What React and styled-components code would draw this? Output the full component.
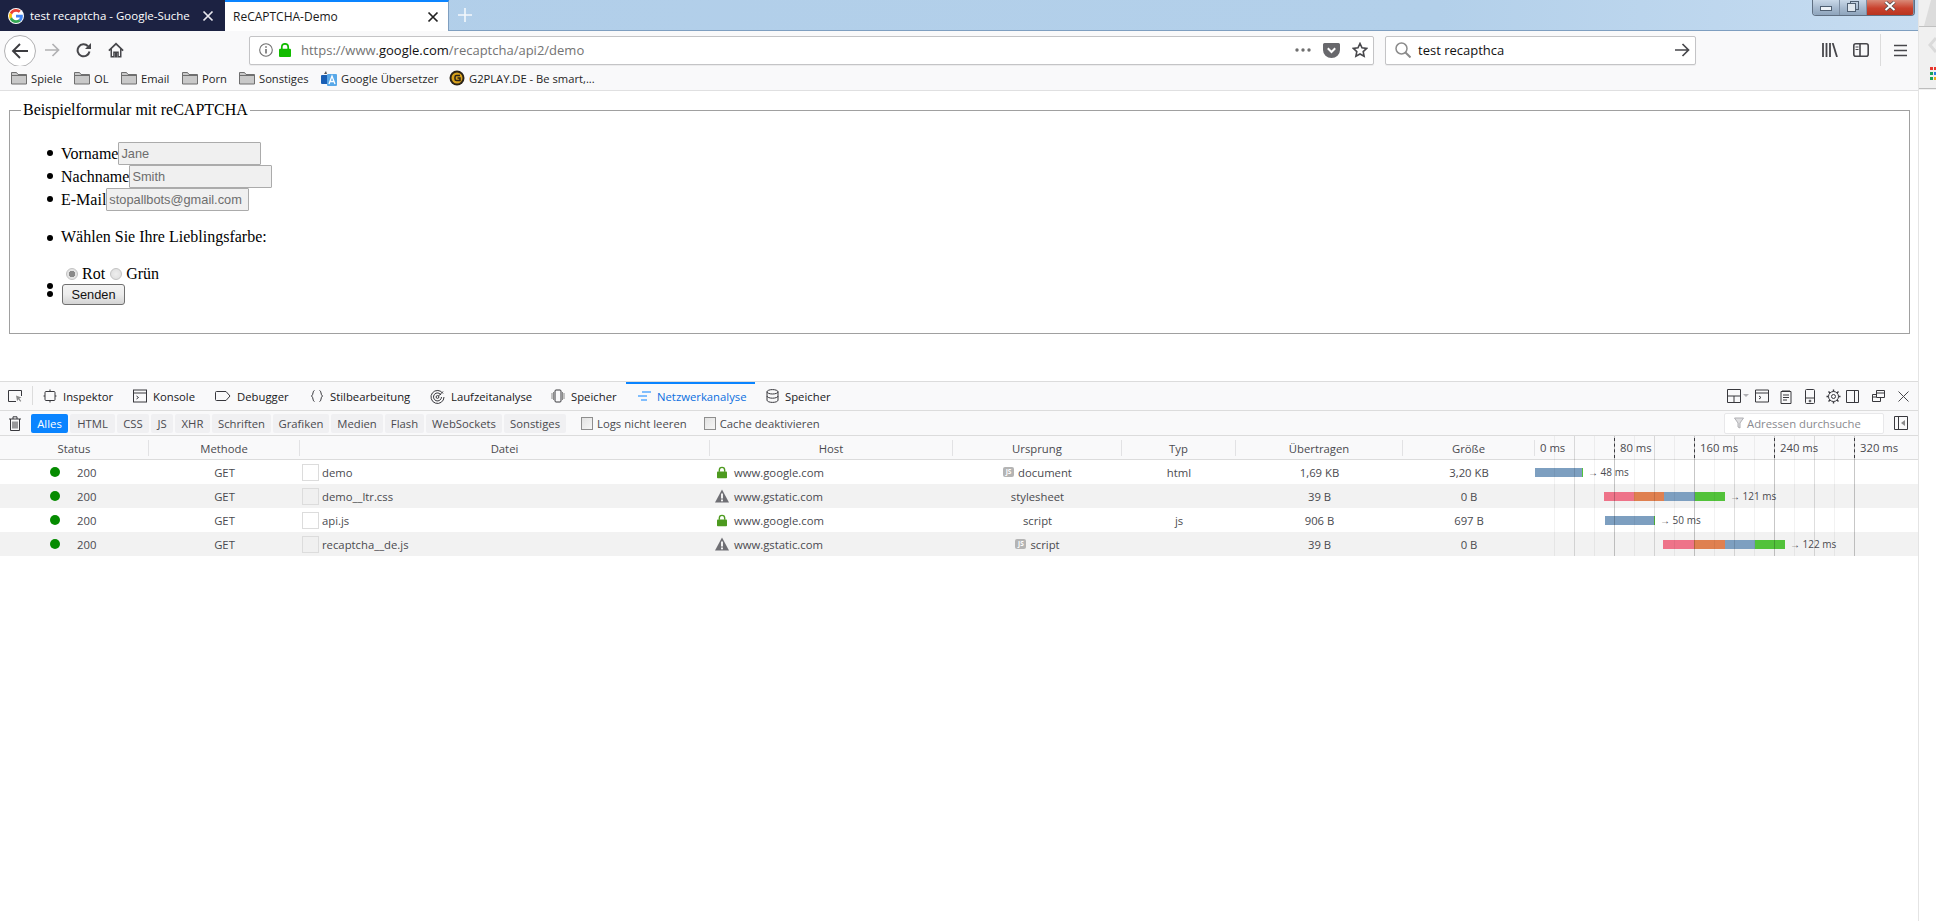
import React from "react";
import styled, { createGlobalStyle } from "styled-components";

const GlobalStyle = createGlobalStyle`
  html, body {
    margin: 0;
    padding: 0;
    background: #fff;
    overflow: hidden;
  }
  * {
    box-sizing: border-box;
  }
`;

const UI_FONT = `"Open Sans", "Noto Sans", sans-serif`;

const Screen = styled.div`
  display: flex;
  width: 1936px;
  height: 921px;
  overflow: hidden;
  font-family: ${UI_FONT};
`;

const Main = styled.div`
  width: 1919px;
  height: 921px;
  display: flex;
  flex-direction: column;
  border-right: 1px solid #e4e4e4;
`;

const Sliver = styled.div`
  width: 17px;
  height: 90px;
  flex: none;
`;

/* tab strip */
const TabStrip = styled.div`
  height: 31px;
  display: flex;
  background: linear-gradient(90deg, #b1cee9 0%, #b3d0ea 75%, #c6dcf1 100%);
  border-bottom: 1px solid #7f9fc0;
  position: relative;
`;

const Tab = styled.div`
  width: ${(p) => p.$w}px;
  height: 31px;
  display: flex;
  align-items: center;
  padding-left: ${(p) => p.$pad}px;
  font-size: ${(p) => p.$fs}px;
  color: ${(p) => (p.$active ? "#1a1a1a" : "#fff")};
  background: ${(p) => (p.$active ? "#fff" : "#1c2242")};
  border-top: ${(p) => (p.$active ? "2px solid #0a84ff" : "none")};
  border-right: ${(p) => (p.$active ? "1px solid #7f9fc0" : "none")};
`;

const TabLabel = styled.span`
  width: ${(p) => p.$w}px;
  margin-left: ${(p) => p.$ml || 0}px;
  white-space: nowrap;
`;

const NewTab = styled.svg`
  margin: 8px 0 0 9px;
`;

const WindowButtons = styled.div`
  margin: 0 3px 0 auto;
  width: 103px;
  height: 16px;
  display: flex;
  border: 1px solid #5f6f82;
  border-top: none;
  border-radius: 0 0 4px 4px;
  overflow: hidden;
`;

const WinButton = styled.div`
  width: ${(p) => p.$w}px;
  display: flex;
  align-items: flex-start;
  justify-content: center;
  border-right: 1px solid #7d8ea3;
  background: ${(p) =>
    p.$close
      ? "linear-gradient(#d98a78, #c9412d 55%, #b8341f)"
      : "linear-gradient(#c9d8e8, #a8bbd0 50%, #8ea4bc)"};
`;

/* address toolbar */
const Toolbar = styled.div`
  height: 35px;
  display: flex;
  align-items: center;
  padding-left: 4px;
  background: #f9f9fa;
`;

const BackButton = styled.div`
  width: 32px;
  height: 32px;
  margin-top: 4px;
  display: flex;
  align-items: center;
  justify-content: center;
  background: #fff;
  border: 1px solid #b1b1b3;
  border-radius: 50%;
`;

const NavGroup = styled.div`
  display: flex;
  align-items: center;
  gap: 16px;
  margin-left: 8px;
  margin-top: 3px;
`;

const UrlBox = styled.div`
  height: 29px;
  display: flex;
  align-items: center;
  width: ${(p) => p.$w}px;
  margin-left: ${(p) => p.$ml}px;
  padding-left: ${(p) => p.$pad}px;
  margin-top: 3px;
  background: #fff;
  border: 1px solid #c4c4c6;
  border-radius: 2px;
  font-size: 13px;
  box-shadow: 0 1px 1px rgba(0, 0, 0, 0.06);
`;

const UrlText = styled.span`
  color: #737373;
  margin-left: 10px;
  white-space: nowrap;
`;

const UrlHost = styled.span`
  color: #111;
`;

const UrlActions = styled.div`
  margin-left: auto;
  display: flex;
  align-items: center;
  gap: 12px;
  padding-right: 5px;
`;

const SearchText = styled.span`
  color: #111;
  margin-left: 7px;
`;

const ToolIcons = styled.div`
  display: flex;
  align-items: center;
  margin-left: 126px;
  margin-top: 3px;
`;

const ToolSep = styled.div`
  width: 1px;
  height: 32px;
  background: #dcdcdc;
  margin: 0 13px 0 11px;
`;

/* bookmarks */
const Bookmarks = styled.div`
  height: 25px;
  display: flex;
  align-items: center;
  padding-left: 11px;
  font-size: 11.2px;
  color: #1f1f1f;
  background: #f9f9fa;
  border-bottom: 1px solid #e0e0e1;
`;

const Bookmark = styled.div`
  width: ${(p) => p.$w}px;
  display: flex;
  align-items: center;
  gap: 4px;
  white-space: nowrap;
`;

/* page content */
const Page = styled.div`
  height: 290px;
  padding: 10px 9px 0;
  font-family: "Liberation Serif", serif;
  font-size: 16px;
  color: #000;
`;

const Fieldset = styled.fieldset`
  margin: 0;
  width: 1901px;
  height: 233px;
  padding: 0 0 0 9px;
  border: 1px solid #a0a0a0;
  min-inline-size: 0;
`;

const Legend = styled.legend`
  padding: 0 2px;
  margin-left: 2px;
  line-height: 18px;
`;

const FormList = styled.ul`
  list-style: none;
  margin: 23px 0 0;
  padding: 0 0 0 42px;
`;

const FormItem = styled.li`
  position: relative;
  display: flex;
  align-items: center;
  height: 23px;

  &::before {
    content: "";
    position: absolute;
    left: -14px;
    top: 8px;
    width: 6px;
    height: 6px;
    border-radius: 50%;
    background: #000;
  }
`;

const ColourItem = styled(FormItem)`
  display: block;
  height: auto;
  padding-top: 17px;

  &::before {
    top: 24px;
  }
`;

const ColourQuestion = styled.div`
  line-height: 18px;
  margin-bottom: 19px;
`;

const ColourChoices = styled.div`
  display: flex;
  align-items: center;
  height: 18px;
  padding-left: 5px;
`;

const Radio = styled.input.attrs({ type: "radio" })`
  appearance: none;
  width: 12px;
  height: 12px;
  margin: 0 4px 0 ${(p) => p.$ml || 0}px;
  border-radius: 50%;
  border: 1px solid #c2c2c2;
  background: ${(p) =>
    p.$on
      ? "radial-gradient(circle, #8a8a8a 0 3px, #e4e4e4 3.5px)"
      : "radial-gradient(circle, #eee, #dcdcdc)"};
`;

const EmptyItem = styled(FormItem)`
  height: 1px;

  &::before {
    top: 0;
  }
`;

const FormInput = styled.input`
  width: 143px;
  height: 23px;
  padding: 1px 2px;
  margin: 0;
  background: #f0f0f0;
  border: 1px solid #ababab;
  border-radius: 1px;
  color: #6d6d6d;
  font-family: "Liberation Sans", sans-serif;
  font-size: 12.8px;
  outline: none;
`;

const SendItem = styled(FormItem)`
  height: 21px;

  &::before {
    top: 7px;
  }
`;

const SendButton = styled.button`
  width: 63px;
  height: 21px;
  margin-left: 1px;
  padding: 0;
  border: 1px solid #707070;
  border-radius: 3px;
  background: linear-gradient(#f3f3f3 0%, #ececec 50%, #d4d4d4 100%);
  color: #111;
  font-family: "Liberation Sans", sans-serif;
  font-size: 12.8px;
`;

/* devtools */
const Devtools = styled.div`
  border-top: 1px solid #dcdcdc;
  color: #38383d;
`;

const DevTabs = styled.div`
  height: 29px;
  display: flex;
  align-items: stretch;
  background: #f9f9fa;
  border-bottom: 1px solid #dcdcdc;
  font-size: 11.3px;
`;

const Inspect = styled.div`
  width: 33px;
  display: flex;
  align-items: center;
  padding-left: 8px;
  position: relative;
  &::after {
    content: "";
    position: absolute;
    right: 0;
    top: 4px;
    bottom: 5px;
    width: 1px;
    background: #dcdcdc;
  }
`;

const DevTab = styled.div`
  width: ${(p) => p.$w}px;
  display: flex;
  align-items: center;
  gap: 6px;
  padding-left: ${(p) => p.$pad || 10}px;
  white-space: nowrap;
  color: ${(p) => (p.$active ? "#0a6fe0" : "#18181a")};
  box-shadow: ${(p) => (p.$active ? "inset 0 2px 0 #0a84ff" : "none")};
`;

const DevActions = styled.div`
  margin-left: auto;
  display: flex;
  align-items: center;
  padding-right: 9px;
`;

const DevAction = styled.div`
  width: ${(p) => p.$w}px;
  display: flex;
  justify-content: flex-start;
`;

const FilterBar = styled.div`
  height: 25px;
  display: flex;
  align-items: center;
  padding-left: 9px;
  background: #f9f9fa;
  border-bottom: 1px solid #dcdcdc;
  font-size: 11.3px;
`;

const FilterChips = styled.div`
  display: flex;
  gap: 2px;
  margin-left: 10px;
`;

const Chip = styled.div`
  width: ${(p) => p.$w}px;
  height: 19px;
  display: flex;
  align-items: center;
  justify-content: center;
  border-radius: 2px;
  background: ${(p) => (p.$active ? "#0a84ff" : "#f0f0f2")};
  color: ${(p) => (p.$active ? "#fff" : "#4a4a4f")};
`;

const CheckLabel = styled.div`
  display: flex;
  align-items: center;
  gap: 4px;
  margin-left: ${(p) => p.$ml}px;
  color: #4a4a4f;
  white-space: nowrap;
`;

const CheckBox = styled.span`
  width: 12px;
  height: 13px;
  border: 1px solid #8e8e8e;
  background: linear-gradient(135deg, #e2e2e2, #f6f6f6);
`;

const FilterInput = styled.div`
  margin-left: auto;
  width: 160px;
  height: 21px;
  display: flex;
  align-items: center;
  gap: 3px;
  padding-left: 9px;
  background: #fff;
  border: 1px solid #e8e8ea;
  border-radius: 2px;
  color: #8a8a8f;
  overflow: hidden;
  white-space: nowrap;
`;

const SidebarToggle = styled.div`
  margin: 0 10px 0 10px;
  display: flex;
`;

const Table = styled.div`
  position: relative;
  font-size: 11.3px;
`;

const GRID = "149px 151px 410px 243px 169px 114px 167px 132px 383px";

const HeadRow = styled.div`
  display: grid;
  grid-template-columns: ${GRID};
  height: 24px;
  background: #f9f9fa;
  border-bottom: 1px solid #dcdcdc;
  color: #4a4a4f;
`;

const HeadCell = styled.div`
  display: flex;
  align-items: center;
  justify-content: center;
  margin: 4px 0 3px;
  border-right: 1px solid #e2e2e4;
`;

const TimeHead = styled.div`
  display: flex;
  align-items: center;
`;

const TimeLabel = styled.span`
  flex: none;
  width: ${(p) => p.$w || 80}px;
  padding-left: 5px;
  white-space: nowrap;
`;

const Row = styled.div`
  display: grid;
  grid-template-columns: ${GRID};
  height: 24px;
  background: ${(p) => (p.$odd ? "#f2f2f2" : "#fff")};
  color: #4a4a4f;
`;

const Cell = styled.div`
  display: flex;
  align-items: center;
  justify-content: ${(p) => (p.$left ? "flex-start" : "center")};
  gap: ${(p) => p.$gap || 0}px;
  padding-left: ${(p) => p.$pad || 0}px;
  white-space: nowrap;
`;

const StatusDot = styled.span`
  width: 10px;
  height: 10px;
  border-radius: 50%;
  background: #058b00;
  margin-right: 17px;
`;

const Thumb = styled.span`
  width: 17px;
  height: 17px;
  border: 1px solid #dcdcdc;
  background: ${(p) => (p.$odd ? "#f0f0f0" : "#fff")};
`;

const JsBadge = styled.span`
  width: 11px;
  height: 10px;
  margin-right: 4px;
  border-radius: 2px;
  background: #b4b4b4;
  color: #fff;
  font-size: 6.5px;
  font-weight: 700;
  line-height: 10px;
  text-align: center;
`;

const Waterfall = styled.div`
  display: flex;
  align-items: center;
  padding-left: ${(p) => p.$offset}px;
`;

const BarPart = styled.span`
  width: ${(p) => p.$w}px;
  height: 9px;
  background: ${(p) => p.$c};
`;

const BarLabel = styled.span`
  margin-left: 5px;
  font-size: 10px;
  color: #4a4a4f;
  white-space: nowrap;
`;

const GridLines = styled.div`
  position: absolute;
  left: 1535px;
  top: 0;
  bottom: 0;
  display: flex;
  pointer-events: none;
`;

const GridLine = styled.span`
  width: 20px;
  height: 100%;
  position: relative;
  border-right: 1px solid
    ${(p) =>
      p.$level === 2
        ? "rgba(0,0,0,0.22)"
        : p.$level === 1
        ? "rgba(0,0,0,0.13)"
        : "rgba(0,0,0,0.05)"};

  &::after {
    content: "";
    display: ${(p) => (p.$level === 2 ? "block" : "none")};
    position: absolute;
    right: -1px;
    top: 2px;
    height: 20px;
    border-right: 1px dashed #38383d;
  }
`;

const Svg = ({ w = 16, h = 16, vb, color = "currentColor", sw = 1.2, children }) => (
  <svg
    width={w}
    height={h}
    viewBox={vb || `0 0 ${w} ${h}`}
    fill="none"
    stroke={color}
    strokeWidth={sw}
    style={{ flex: "none", display: "block" }}
  >
    {children}
  </svg>
);

const GoogleG = () => (
  <svg width="16" height="16" viewBox="0 0 48 48" style={{ flex: "none", marginLeft: 8 }}>
    <circle cx="24" cy="24" r="24" fill="#fff" />
    <path fill="#EA4335" d="M24 11c3.4 0 6.2 1.2 8.4 3.2l5.8-5.8C34.6 5.100 29.800 3 24 3 15.800 3 8.800 7.700 5.400 14.500l6.800 5.300C13.800 14.800 18.500 11 24 11z" />
    <path fill="#4285F4" d="M44.500 24.700c0-1.500-.1-2.900-.4-4.300H24v8.100h11.500c-.5 2.700-2 5-4.300 6.500l6.600 5.200c3.900-3.600 6.700-9 6.700-15.500z" />
    <path fill="#FBBC05" d="M12.200 28.200c-.4-1.300-.7-2.700-.7-4.200s.3-2.900.7-4.200l-6.800-5.300C4 17.500 3 20.700 3 24s1 6.500 2.400 9.500l6.800-5.300z" />
    <path fill="#34A853" d="M24 45c5.800 0 10.600-1.900 14.100-5.200l-6.600-5.200c-1.900 1.300-4.400 2-7.500 2-5.500 0-10.200-3.700-11.800-8.800l-6.800 5.300C8.800 40.300 15.800 45 24 45z" />
  </svg>
);

const CloseX = ({ color }) => (
  <Svg w={12} h={12} color={color} sw={1.7}>
    <path d="M1.500 1.500l9 9M10.500 1.500l-9 9" />
  </Svg>
);

const Arrow = ({ color, size = 16, sw = 1.7 }) => (
  <Svg w={size} h={size} vb="0 0 16 16" color={color} sw={sw}>
    <path d="M1 8h13.500M8.500 2l6 6-6 6" />
  </Svg>
);

const BackArrow = () => (
  <Svg w={18} h={18} vb="0 0 18 18" color="#3c3c40" sw={1.9}>
    <path d="M17 9H2M9 2 2 9l7 7" />
  </Svg>
);

const Reload = () => (
  <Svg w={16} h={16} color="#47474b" sw={2}>
    <path d="M13.500 9.500A6 6 0 1 1 12 4.200" />
    <path d="M15 1v6H9z" fill="#47474b" stroke="none" />
  </Svg>
);

const Home = () => (
  <svg width="16" height="16" viewBox="0 0 16 16" style={{ display: "block" }}>
    <path d="M8 0.500 0.300 8l1.100 1.200L2.500 8.200V15.500h4V11h3v4.500h4V8.200l1.100 1 1.100-1.200z" fill="#47474b" />
    <path d="M8 3 4 6.800v7.200h1.200V9.500h5.600V14H12V6.800z" fill="#f9f9fa" />
    <rect x="6.500" y="10.500" width="3" height="5" fill="#47474b" />
  </svg>
);

const Info = () => (
  <Svg w={14} h={14} color="#6f6f6f" sw={1.1}>
    <circle cx="7" cy="7" r="6.300" />
    <path d="M7 6v4.500M7 3.200v1.500" strokeWidth="1.600" />
  </Svg>
);

const Lock = ({ color, w = 12, h = 14 }) => (
  <svg width={w} height={h} viewBox="0 0 12 14" style={{ flex: "none", display: "block" }}>
    <path d="M2.800 6V4a3.200 3.200 0 0 1 6.400 0v2" fill="none" stroke={color} strokeWidth="1.700" />
    <rect x="0" y="5.800" width="12" height="8.200" rx="1" fill={color} />
  </svg>
);

const Warn = () => (
  <svg width="14" height="14" viewBox="0 0 14 14" style={{ flex: "none", display: "block" }}>
    <path d="M7 0.500 14 13.500H0z" fill="#6f6f74" />
    <rect x="6.100" y="4.500" width="1.800" height="5" fill="#fff" />
    <rect x="6.100" y="10.500" width="1.800" height="1.800" fill="#fff" />
  </svg>
);

const Folder = () => (
  <svg width="16" height="14" viewBox="0 0 16 14" style={{ flex: "none", display: "block" }}>
    <path d="M0.500 13V1.500h5l1.500 2h8.500V13z" fill="#c9c9c9" stroke="#6f6f6f" />
    <path d="M1 4.500h14" stroke="#6f6f6f" />
  </svg>
);

const Translate = () => (
  <svg width="16" height="16" viewBox="0 0 16 16" style={{ flex: "none", display: "block" }}>
    <rect x="0" y="5" width="9" height="9" rx="1" fill="#1a5fb4" />
    <path d="M5 1l1 3H3z" fill="#555" />
    <rect x="6" y="4" width="10" height="12" rx="1" fill="#58a8e8" />
    <path d="M8 14l3-8 3 8M9.300 11.500h3.400" stroke="#fff" strokeWidth="1.300" fill="none" />
  </svg>
);

const G2Coin = () => (
  <svg width="16" height="16" viewBox="0 0 16 16" style={{ flex: "none", display: "block" }}>
    <circle cx="8" cy="8" r="7.500" fill="#2b2418" />
    <circle cx="8" cy="8" r="5.500" fill="#d9a21c" />
    <path d="M11 5.500H7.500a1.500 1.500 0 0 0-1.500 1.500v2a1.500 1.500 0 0 0 1.500 1.500H11V8H8.500" fill="none" stroke="#2b2418" strokeWidth="1.500" />
  </svg>
);

const Dots = () => (
  <svg width="16" height="4" viewBox="0 0 16 4" style={{ display: "block" }}>
    <circle cx="2" cy="2" r="1.700" fill="#6f6f6f" />
    <circle cx="8" cy="2" r="1.700" fill="#6f6f6f" />
    <circle cx="14" cy="2" r="1.700" fill="#6f6f6f" />
  </svg>
);

const Pocket = () => (
  <svg width="17" height="15" viewBox="0 0 17 15" style={{ display: "block" }}>
    <path d="M1.500 0h14A1.500 1.500 0 0 1 17 1.500V7a8.500 8 0 0 1-17 0V1.500A1.500 1.500 0 0 1 1.500 0z" fill="#68686c" />
    <path d="M4.800 5.300 8.500 9l3.700-3.700" fill="none" stroke="#fff" strokeWidth="2" />
  </svg>
);

const Star = () => (
  <Svg w={16} h={16} color="#47474b" sw={1.600}>
    <path d="M8 1.500l2 4.300 4.700.6-3.500 3.200.9 4.700L8 12l-4.100 2.300.9-4.700L1.300 6.400l4.700-.6z" />
  </Svg>
);

const Magnifier = () => (
  <Svg w={16} h={16} color="#8b8b8b" sw={1.500}>
    <circle cx="6.500" cy="6.500" r="5.500" />
    <path d="M10.500 10.500l5 5" strokeWidth="2" />
  </Svg>
);

const Library = () => (
  <svg width="16" height="14" viewBox="0 0 16 14" style={{ display: "block" }}>
    <path d="M1 0v14M4.500 0v14M8 0v14" stroke="#47474b" strokeWidth="1.800" />
    <path d="M10.700 0l4.300 14" stroke="#47474b" strokeWidth="1.800" />
  </svg>
);

const SidebarIcon = () => (
  <Svg w={16} h={14} color="#47474b" sw={1.600}>
    <rect x="0.800" y="0.800" width="14.400" height="12.400" rx="2" />
    <path d="M7 1v12" />
    <path d="M2.500 4h3M2.500 6.500h3" strokeWidth="1" />
  </Svg>
);

const Burger = () => (
  <svg width="13" height="13" viewBox="0 0 13 13" style={{ display: "block" }}>
    <path d="M0 1.500h13M0 6.500h13M0 11.500h13" stroke="#47474b" strokeWidth="1.700" />
  </svg>
);

const SliverArt = () => (
  <svg width="17" height="90" viewBox="0 0 17 90" style={{ display: "block" }}>
    <rect width="17" height="90" fill="#f0f0f0" />
    <path d="M5 26 12 0h5v26z" fill="#dcdcdc" />
    <rect y="26" width="17" height="1" fill="#c0c0c0" />
    <path d="M17 38 11 45l6 7" fill="none" stroke="#dadada" strokeWidth="3" />
    <rect x="11" y="67" width="3" height="3" fill="#e8352c" />
    <rect x="15" y="67" width="2" height="3" fill="#e8352c" />
    <rect x="11" y="72" width="3" height="3" fill="#1aa35b" />
    <rect x="15" y="72" width="2" height="3" fill="#2b7de0" />
    <rect x="11" y="77" width="3" height="3" fill="#1aa35b" />
    <rect x="15" y="77" width="2" height="3" fill="#e8a81c" />
    <rect y="88" width="17" height="1" fill="#bdbdbd" />
  </svg>
);

const InspectIcon = () => (
  <Svg w={15} h={14} color="#38383d" sw={1}>
    <path d="M8 12.500H.500v-11h13V7" />
    <path d="M8 6.500l5.500 2-2.200 1 2 2.500-1 .8-2-2.500-1.200 2z" fill="#8a8a8a" stroke="none" />
  </Svg>
);

const DevIcon = ({ name }) => {
  if (name === "inspector")
    return (
      <Svg w={14} h={14} color="#38383d" sw={1}>
        <rect x="2" y="2.500" width="10" height="9" rx="1" />
        <path d="M7 .5v2M7 11.500v2M.5 7H2M12 7h1.500" />
      </Svg>
    );
  if (name === "console")
    return (
      <Svg w={14} h={14} color="#38383d" sw={1}>
        <rect x=".5" y="1" width="13" height="12" />
        <path d="M.5 4h13M3.500 7l2 1.500-2 1.500" />
      </Svg>
    );
  if (name === "debugger")
    return (
      <Svg w={16} h={14} color="#38383d" sw={1}>
        <path d="M1.500 2.500H11l4 4.500-4 4.500H1.500a1 1 0 0 1-1-1v-7a1 1 0 0 1 1-1z" />
      </Svg>
    );
  if (name === "style")
    return (
      <Svg w={14} h={14} color="#38383d" sw={1}>
        <path d="M4.500 1.500C2.500 1.500 3.500 6 1.500 7c2 1 1 5.500 3 5.500M9.500 1.500c2 0 1 4.500 3 5.500-2 1-1 5.500-3 5.500" />
      </Svg>
    );
  if (name === "perf")
    return (
      <Svg w={15} h={15} color="#38383d" sw={1}>
        <path d="M13 4.500A6.500 6.500 0 1 0 14 8" />
        <path d="M11 6A4 4 0 1 0 11.500 8" />
        <circle cx="7.500" cy="8" r="1.400" />
        <path d="M8.500 7l4.500-4.500" />
      </Svg>
    );
  if (name === "memory")
    return (
      <Svg w={14} h={14} color="#38383d" sw={1}>
        <rect x="4" y="1" width="6" height="12" rx="1" />
        <path d="M1 4v6M2.500 3v8M11.500 3v8M13 4v6" stroke="#8a8a8a" />
      </Svg>
    );
  if (name === "network")
    return (
      <Svg w={14} h={14} color="#0a84ff" sw={1.200}>
        <path d="M5 3h9M1 7h9M4 11h6" />
      </Svg>
    );
  return (
    <Svg w={13} h={14} color="#38383d" sw={1}>
      <ellipse cx="6.500" cy="2.800" rx="5.500" ry="2.200" />
      <path d="M1 2.800v8.400c0 1.200 2.500 2.200 5.500 2.200s5.500-1 5.500-2.200V2.800M1 7c0 1.200 2.500 2.200 5.500 2.200S12 8.200 12 7" />
    </Svg>
  );
};

const Trash = () => (
  <Svg w={12} h={15} color="#38383d" sw={1}>
    <path d="M0 3h12M4 3V.8h4V3M1.500 3v11.500h9V3M4 5.500v7M6 5.500v7M8 5.500v7" />
  </Svg>
);

const Funnel = () => (
  <Svg w={10} h={12} color="#b0b0b4" sw={1}>
    <path d="M.5 1h9L6 6v5L4 10V6z" fill="#dedee0" />
  </Svg>
);

const bookmarks = [
  ["Spiele", <Folder key="f" />, 63],
  ["OL", <Folder key="f" />, 47],
  ["Email", <Folder key="f" />, 61],
  ["Porn", <Folder key="f" />, 57],
  ["Sonstiges", <Folder key="f" />, 82],
  ["Google Übersetzer", <Translate key="t" />, 128],
  ["G2PLAY.DE - Be smart,...", <G2Coin key="g" />, 160],
];

const devTabs = [
  ["Inspektor", "inspector", 90, 10],
  ["Konsole", "console", 82, 10],
  ["Debugger", "debugger", 95, 10],
  ["Stilbearbeitung", "style", 120, 10],
  ["Laufzeitanalyse", "perf", 121, 10],
  ["Speicher", "memory", 85, 10],
  ["Netzwerkanalyse", "network", 129, 11],
  ["Speicher", "storage", 90, 11],
];

const chips = [
  ["Alles", 37],
  ["HTML", 45],
  ["CSS", 32],
  ["JS", 22],
  ["XHR", 35],
  ["Schriften", 59],
  ["Grafiken", 56],
  ["Medien", 52],
  ["Flash", 39],
  ["WebSockets", 76],
  ["Sonstiges", 62],
];

const columns = ["Status", "Methode", "Datei", "Host", "Ursprung", "Typ", "Übertragen", "Größe"];

const BLOCK = "#ee7389";
const DNS = "#df8050";
const WAIT = "#7d9fc0";
const RECV = "#52c23a";

const requests = [
  {
    file: "demo", host: "www.google.com", secure: true, cause: "document", js: true, type: "html",
    sent: "1,69 KB", size: "3,20 KB", offset: 0, time: "48 ms",
    bars: [[47, WAIT], [1, RECV]],
  },
  {
    file: "demo__ltr.css", host: "www.gstatic.com", secure: false, cause: "stylesheet", type: "",
    sent: "39 B", size: "0 B", offset: 69, time: "121 ms",
    bars: [[30, BLOCK], [30, DNS], [31, WAIT], [30, RECV]],
  },
  {
    file: "api.js", host: "www.google.com", secure: true, cause: "script", type: "js",
    sent: "906 B", size: "697 B", offset: 70, time: "50 ms",
    bars: [[49, WAIT], [1, RECV]],
  },
  {
    file: "recaptcha__de.js", host: "www.gstatic.com", secure: false, cause: "script", js: true, type: "",
    sent: "39 B", size: "0 B", offset: 128, time: "122 ms",
    bars: [[31, BLOCK], [31, DNS], [30, WAIT], [30, RECV]],
  },
];

const gridLevel = (i) => ((i + 1) % 4 === 0 ? 2 : (i + 1) % 2 === 0 ? 1 : 0);

const App = () => {
  return (
    <Screen>
      <GlobalStyle />
      <Main>
        <TabStrip>
          <Tab $w={225} $fs={11.5}>
            <GoogleG />
            <TabLabel $w={172} $ml={6}>test recaptcha - Google-Suche</TabLabel>
            <CloseX color="#e8e8ee" />
          </Tab>
          <Tab $w={224} $fs={12} $active $pad={8}>
            <TabLabel $w={194}>ReCAPTCHA-Demo</TabLabel>
            <CloseX color="#222" />
          </Tab>
          <NewTab width="14" height="14" viewBox="0 0 14 14">
            <path d="M7 0v14M0 7h14" stroke="#fff" strokeWidth="1.600" opacity="0.85" />
          </NewTab>
          <WindowButtons>
            <WinButton $w={28}>
              <svg width="12" height="6" style={{ marginTop: 6 }}>
                <rect x=".5" y=".5" width="11" height="4" fill="#eef3f8" stroke="#4f5f72" />
              </svg>
            </WinButton>
            <WinButton $w={27}>
              <svg width="12" height="12" style={{ marginTop: 1 }}>
                <rect x="3.500" y=".5" width="8" height="8" fill="none" stroke="#4f5f72" />
                <rect x=".5" y="2.500" width="8" height="8" fill="#dfe7ef" stroke="#4f5f72" />
              </svg>
            </WinButton>
            <WinButton $w={48} $close>
              <svg width="12" height="10" viewBox="0 0 12 10" style={{ marginTop: 1 }}>
                <path d="M1.500 1l9 8M10.500 1l-9 8" stroke="#4a4a4a" strokeWidth="3.400" />
                <path d="M1.500 1l9 8M10.500 1l-9 8" stroke="#fff" strokeWidth="2" />
              </svg>
            </WinButton>
          </WindowButtons>
        </TabStrip>

        <Toolbar>
          <BackButton>
            <BackArrow />
          </BackButton>
          <NavGroup>
            <Arrow color="#b1b1b3" />
            <Reload />
            <Home />
          </NavGroup>
          <UrlBox $w={1125} $ml={125} $pad={9}>
            <Info />
            <span style={{ width: 6 }} />
            <Lock color="#12bc00" />
            <UrlText>
              https://www.<UrlHost>google.com</UrlHost>/recaptcha/api2/demo
            </UrlText>
            <UrlActions>
              <Dots />
              <Pocket />
              <Star />
            </UrlActions>
          </UrlBox>
          <UrlBox $w={311} $ml={11} $pad={9}>
            <Magnifier />
            <SearchText>test recapthca</SearchText>
            <UrlActions>
              <Arrow color="#47474b" />
            </UrlActions>
          </UrlBox>
          <ToolIcons>
            <Library />
            <span style={{ width: 15 }} />
            <SidebarIcon />
            <ToolSep />
            <Burger />
          </ToolIcons>
        </Toolbar>

        <Bookmarks>
          {bookmarks.map(([label, icon, w]) => (
            <Bookmark key={label} $w={w}>
              {icon}
              {label}
            </Bookmark>
          ))}
        </Bookmarks>

        <Page>
          <Fieldset>
            <Legend>Beispielformular mit reCAPTCHA</Legend>
            <FormList>
              <FormItem>
                Vorname
                <FormInput defaultValue="Jane" readOnly />
              </FormItem>
              <FormItem>
                Nachname
                <FormInput defaultValue="Smith" readOnly />
              </FormItem>
              <FormItem>
                E-Mail
                <FormInput defaultValue="stopallbots@gmail.com" readOnly />
              </FormItem>
              <ColourItem>
                <ColourQuestion>Wählen Sie Ihre Lieblingsfarbe:</ColourQuestion>
                <ColourChoices>
                  <Radio $on name="farbe" defaultChecked disabled />
                  Rot
                  <Radio $ml={5} name="farbe" disabled />
                  Grün
                </ColourChoices>
              </ColourItem>
              <EmptyItem />
              <SendItem>
                <SendButton>Senden</SendButton>
              </SendItem>
            </FormList>
          </Fieldset>
        </Page>

        <Devtools>
          <DevTabs>
            <Inspect>
              <InspectIcon />
            </Inspect>
            {devTabs.map(([label, icon, w, pad]) => (
              <DevTab key={icon} $w={w} $active={icon === "network"} $pad={pad}>
                <DevIcon name={icon} />
                {label}
              </DevTab>
            ))}
            <DevActions>
              <DevAction $w={28}>
                <Svg w={24} h={14} color="#38383d" sw={1}>
                  <path d="M.5 .5h13v13H.5zM.5 7h13M7 7v6.500" />
                  <path d="M16 5h6l-3 3z" fill="#b0b0b4" stroke="none" />
                </Svg>
              </DevAction>
              <DevAction $w={25}>
                <Svg w={14} h={14} color="#38383d" sw={1}>
                  <path d="M.5 1h13v12H.5zM.5 4h13M4 7l2 1.500-2 1.500" />
                </Svg>
              </DevAction>
              <DevAction $w={25}>
                <Svg w={12} h={15} color="#38383d" sw={1}>
                  <path d="M1 2.500h10v12H1zM3 1v2M5 1v2M7 1v2M9 1v2M3 6h6M3 8.500h6M3 11h4" />
                </Svg>
              </DevAction>
              <DevAction $w={21}>
                <Svg w={10} h={15} color="#38383d" sw={1}>
                  <rect x=".5" y=".5" width="9" height="14" rx="1" />
                  <path d="M.5 9h9" />
                  <circle cx="5" cy="12" r=".9" />
                </Svg>
              </DevAction>
              <DevAction $w={20}>
                <Svg w={15} h={15} color="#38383d" sw={1}>
                  <circle cx="7.500" cy="7.500" r="2" />
                  <circle cx="7.500" cy="7.500" r="5" />
                  <path d="M7.500 .5v2M7.500 12.500v2M.5 7.500h2M12.500 7.500h2M2.500 2.500l1.500 1.500M11 11l1.500 1.500M12.500 2.500 11 4M4 11l-1.500 1.500" strokeWidth="1.400" />
                </Svg>
              </DevAction>
              <DevAction $w={26}>
                <Svg w={13} h={13} color="#38383d" sw={1}>
                  <path d="M.5 .5h12v12H.5zM8.500 .5v12" />
                </Svg>
              </DevAction>
              <DevAction $w={26}>
                <Svg w={13} h={13} color="#38383d" sw={1}>
                  <path d="M4.500 .5h8v7h-8zM4.500 3h8M.5 4.500h4M.5 4.500v7h8V7.500M.5 7h4" />
                </Svg>
              </DevAction>
              <DevAction $w={11}>
                <Svg w={11} h={11} color="#47474b" sw={1}>
                  <path d="M.5 .5l10 10M10.500 .5l-10 10" />
                </Svg>
              </DevAction>
            </DevActions>
          </DevTabs>

          <FilterBar>
            <Trash />
            <FilterChips>
              {chips.map(([label, w], i) => (
                <Chip key={label} $w={w} $active={i === 0}>
                  {label}
                </Chip>
              ))}
            </FilterChips>
            <CheckLabel $ml={15}>
              <CheckBox />
              Logs nicht leeren
            </CheckLabel>
            <CheckLabel $ml={17}>
              <CheckBox />
              Cache deaktivieren
            </CheckLabel>
            <FilterInput>
              <Funnel />
              Adressen durchsuche
            </FilterInput>
            <SidebarToggle>
              <Svg w={14} h={14} color="#38383d" sw={1}>
                <path d="M.5 .5h13v13H.5zM4.500 .5v13" />
                <path d="M7 7l4-3v6z" fill="#8a8a8a" stroke="none" />
              </Svg>
            </SidebarToggle>
          </FilterBar>

          <Table>
            <HeadRow>
              {columns.map((name) => (
                <HeadCell key={name}>{name}</HeadCell>
              ))}
              <TimeHead>
                {["0 ms", "80 ms", "160 ms", "240 ms", "320 ms"].map((t) => (
                  <TimeLabel key={t}>{t}</TimeLabel>
                ))}
              </TimeHead>
            </HeadRow>
            {requests.map((r, i) => (
              <Row key={r.file} $odd={i % 2 === 1}>
                <Cell $left $pad={50}>
                  <StatusDot />
                  200
                </Cell>
                <Cell>GET</Cell>
                <Cell $left $pad={2} $gap={3}>
                  <Thumb $odd={i % 2 === 1} />
                  {r.file}
                </Cell>
                <Cell $left $pad={r.secure ? 7 : 5} $gap={r.secure ? 7 : 5}>
                  {r.secure ? <Lock color="#4d9a1f" w={10} h={13} /> : <Warn />}
                  {r.host}
                </Cell>
                <Cell>
                  {r.js && <JsBadge>JS</JsBadge>}
                  {r.cause}
                </Cell>
                <Cell>{r.type}</Cell>
                <Cell>{r.sent}</Cell>
                <Cell>{r.size}</Cell>
                <Waterfall $offset={r.offset}>
                  {r.bars.map(([w, c], j) => (
                    <BarPart key={j} $w={w} $c={c} />
                  ))}
                  <BarLabel>→ {r.time}</BarLabel>
                </Waterfall>
              </Row>
            ))}
            <GridLines>
              {Array.from({ length: 16 }, (_, i) => (
                <GridLine key={i} $level={gridLevel(i)} />
              ))}
            </GridLines>
          </Table>
        </Devtools>
      </Main>
      <Sliver>
        <SliverArt />
      </Sliver>
    </Screen>
  );
};

export default App;
